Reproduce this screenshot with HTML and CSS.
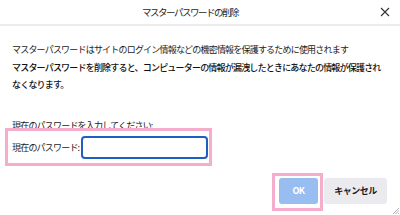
FILE: index.html
```html
<!DOCTYPE html>
<html>
<head>
<meta charset="utf-8">
<title>マスターパスワードの削除</title>
<link rel="stylesheet" href="styles.css">
</head>
<body>
<div class="dialog">
  <div class="header">
    <div class="title">マスターパスワードの削除</div>
    <div class="close">
      <svg viewBox="0 0 10 10" width="10" height="10"><path d="M1,1 L9,9 M9,1 L1,9"></path></svg>
    </div>
  </div>

  <div class="content">
    <p class="info">マスターパスワードはサイトのログイン情報などの機密情報を保護するために使用されます</p>
    <p class="warn">マスターパスワードを削除すると、コンピューターの情報が漏洩したときにあなたの情報が保護されなくなります。</p>

    <div class="prompt">現在のパスワードを入力してください:</div>
    <div class="mark field">
      <label for="pw">現在のパスワード:</label>
      <input type="password" id="pw">
    </div>
  </div>

  <div class="footer">
    <div class="mark okwrap">
      <button class="btn ok" disabled>OK</button>
    </div>
    <button class="btn cancel">キャンセル</button>
  </div>

  <svg class="grip" viewBox="0 0 10 10" width="10" height="10">
    <path d="M9,3 L3,9 M9,5.5 L5.5,9 M9,8 L8,9"></path>
  </svg>
</div>
</body>
</html>
```

FILE: styles.css
```css
body{
  margin:0;
  background:#fff;
  color:#1b1b1b;
  font-family:"Noto Sans CJK JP","Noto Sans",sans-serif;
}
.dialog{
  width:400px;
  height:215px;
  position:relative;
  overflow:hidden;
}
.header{
  display:flex;
  align-items:center;
  height:24px;
  padding-left:10px;
  border-bottom:2px solid #ececec;
}
.title{
  flex:1;
  text-align:center;
  font-size:9.5px;
  letter-spacing:-1.5px;
  color:#1e1e1e;
}
.close{
  width:30px;
  display:flex;
  justify-content:center;
}
.close svg path{
  stroke:#333;
  stroke-width:1.1;
  fill:none;
}
.content{
  padding-left:12px;
}
.info,.warn{
  margin:0;
  font-size:9px;
  letter-spacing:-0.8px;
  line-height:17.5px;
}
.info{
  margin-top:15px;
}
.warn{
  width:372px;
  font-weight:500;
  color:#111;
}
.prompt{
  margin-top:26px;
  font-size:9px;
  letter-spacing:-0.8px;
  line-height:12px;
}
.mark{
  border:3px solid #f4aecb;
  position:relative;
}
.field{
  display:inline-flex;
  align-items:center;
  margin-top:-5px;
  margin-left:-7px;
  padding:5px 1px 4px 4px;
  font-size:9px;
  letter-spacing:-0.8px;
}
.field label{
  width:69px;
}
.field input{
  width:127px;
  height:23px;
  box-sizing:border-box;
  margin:0;
  border:2px solid #1f5fc4;
  border-radius:4px;
  outline:none;
}
.footer{
  display:flex;
  justify-content:flex-end;
  align-items:flex-start;
  margin-top:7px;
  padding-right:13px;
}
.okwrap{
  padding:2px 2px 4px 4px;
  margin-right:1px;
}
.btn{
  height:26px;
  border:none;
  border-radius:3px;
  font-family:"Noto Sans CJK JP","Noto Sans",sans-serif;
  font-size:9px;
  font-weight:bold;
  letter-spacing:-0.5px;
  padding:0;
}
.ok{
  width:39px;
  background:#98bdf0;
  color:#fff;
  display:block;
}
.cancel{
  width:63px;
  margin-top:5px;
  background:#ebebef;
  color:#1b1b1b;
}
.grip{
  position:absolute;
  right:0;
  bottom:0;
}
.grip path{
  stroke:#999;
  stroke-width:0.8;
  fill:none;
}
```
